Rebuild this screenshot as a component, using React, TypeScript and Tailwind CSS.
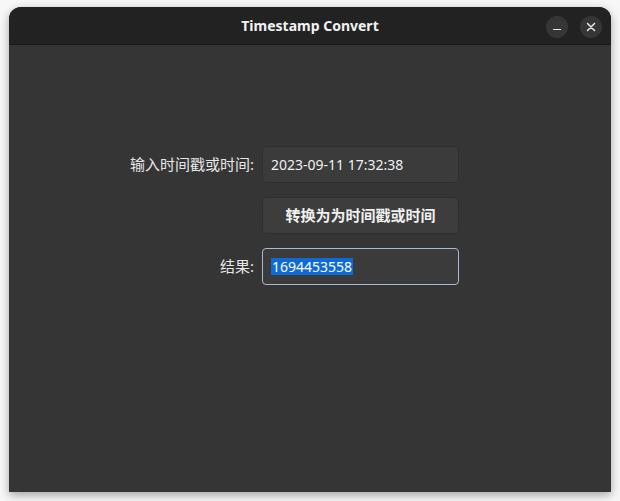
import React from "react";

export default function App() {
  const font = { fontFamily: '"Noto Sans", "Noto Sans CJK SC", sans-serif' };
  return (
    <div className="w-[620px] h-[501px] bg-[#f7f7f7] pt-[7px] pl-[9px]" style={font}>
      <div className="w-[602px] h-[485px] rounded-t-[12px] bg-[#353535] flex flex-col overflow-hidden shadow-[0_3px_10px_rgba(0,0,0,0.35)]">
        <div className="h-[38px] bg-[#222222] border-b border-[#1a1a1a] relative flex items-center justify-center shrink-0">
          <span className="text-[14px] font-bold text-[#f2f2f2] leading-none">Timestamp Convert</span>
          <div className="absolute right-[9px] top-[9px] flex gap-[12px]">
            <div className="w-[22px] h-[22px] rounded-full bg-[#363636] flex items-center justify-center">
              <div className="w-[8px] h-[1.5px] bg-[#e8e8e8] mt-[5px]" />
            </div>
            <div className="w-[22px] h-[22px] rounded-full bg-[#363636] flex items-center justify-center">
              <svg width="10" height="10" viewBox="0 0 10 10">
                <path d="M1.5 1.5 L8.5 8.5 M8.5 1.5 L1.5 8.5" stroke="#e8e8e8" strokeWidth="1.5" strokeLinecap="round" />
              </svg>
            </div>
          </div>
        </div>
        <div className="flex-1 pt-[101px] pl-[115px]">
          <div className="grid grid-cols-[138px_197px] gap-x-[0px] gap-y-[14px] items-center">
            <div className="text-right pr-[8px] text-[15px] text-[#e6e6e6]">输入时间戳或时间:</div>
            <div className="h-[37px] rounded-[4px] bg-[#3b3b3b] border border-[#2e2e2e] flex items-center pl-[8px] text-[14px] text-[#f0f0f0]">
              2023-09-11 17:32:38
            </div>
            <div />
            <div className="h-[37px] rounded-[4px] bg-[#3d3d3d] border border-[#2e2e2e] flex items-center justify-center text-[15px] font-bold text-[#f0f0f0]">
              转换为为时间戳或时间
            </div>
            <div className="text-right pr-[8px] text-[15px] text-[#e6e6e6]">结果:</div>
            <div className="h-[37px] rounded-[4px] bg-[#3b3b3b] border border-[#a6bcd6] flex items-center pl-[8px]">
              <span className="bg-[#0e6ad6] text-[#ffffff] text-[14px] leading-[17px] px-[1px]">1694453558</span>
            </div>
          </div>
        </div>
      </div>
    </div>
  );
}
